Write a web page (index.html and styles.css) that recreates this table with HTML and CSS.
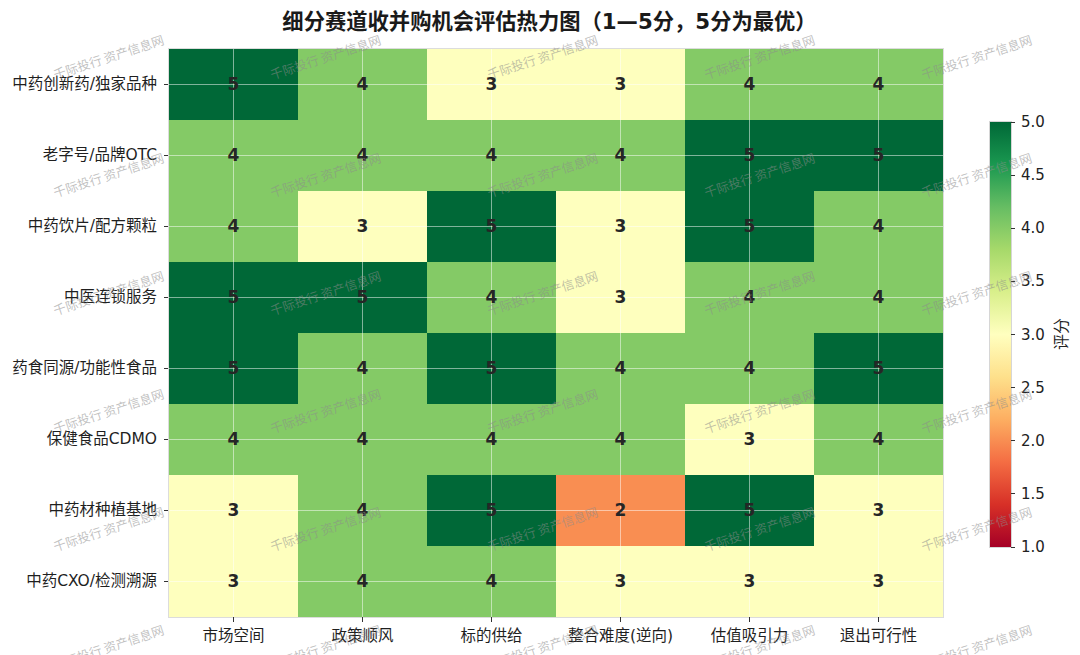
FILE: index.html
```html
<!DOCTYPE html>
<html lang="zh-CN">
<head>
<meta charset="utf-8">
<title>细分赛道收并购机会评估热力图</title>
<link rel="stylesheet" href="styles.css">
</head>
<body>
<div class="page">
  <h1 class="title">细分赛道收并购机会评估热力图（1—5分，5分为最优）</h1>
  <div class="chart">
    <div class="ylabels">
      <div class="ylabel"><span>中药创新药/独家品种</span><i class="ytick"></i></div>
      <div class="ylabel"><span>老字号/品牌OTC</span><i class="ytick"></i></div>
      <div class="ylabel"><span>中药饮片/配方颗粒</span><i class="ytick"></i></div>
      <div class="ylabel"><span>中医连锁服务</span><i class="ytick"></i></div>
      <div class="ylabel"><span>药食同源/功能性食品</span><i class="ytick"></i></div>
      <div class="ylabel"><span>保健食品CDMO</span><i class="ytick"></i></div>
      <div class="ylabel"><span>中药材种植基地</span><i class="ytick"></i></div>
      <div class="ylabel"><span>中药CXO/检测溯源</span><i class="ytick"></i></div>
    </div>
    <div class="plot-col">
      <div class="heatmap">
        <div class="cell v5">5</div><div class="cell v4">4</div><div class="cell v3">3</div><div class="cell v3">3</div><div class="cell v4">4</div><div class="cell v4">4</div>
        <div class="cell v4">4</div><div class="cell v4">4</div><div class="cell v4">4</div><div class="cell v4">4</div><div class="cell v5">5</div><div class="cell v5">5</div>
        <div class="cell v4">4</div><div class="cell v3">3</div><div class="cell v5">5</div><div class="cell v3">3</div><div class="cell v5">5</div><div class="cell v4">4</div>
        <div class="cell v5">5</div><div class="cell v5">5</div><div class="cell v4">4</div><div class="cell v3">3</div><div class="cell v4">4</div><div class="cell v4">4</div>
        <div class="cell v5">5</div><div class="cell v4">4</div><div class="cell v5">5</div><div class="cell v4">4</div><div class="cell v4">4</div><div class="cell v5">5</div>
        <div class="cell v4">4</div><div class="cell v4">4</div><div class="cell v4">4</div><div class="cell v4">4</div><div class="cell v3">3</div><div class="cell v4">4</div>
        <div class="cell v3">3</div><div class="cell v4">4</div><div class="cell v5">5</div><div class="cell v2">2</div><div class="cell v5">5</div><div class="cell v3">3</div>
        <div class="cell v3">3</div><div class="cell v4">4</div><div class="cell v4">4</div><div class="cell v3">3</div><div class="cell v3">3</div><div class="cell v3">3</div>
      </div>
      <div class="xlabels">
        <div class="xlabel"><i class="xtick"></i><span>市场空间</span></div>
        <div class="xlabel"><i class="xtick"></i><span>政策顺风</span></div>
        <div class="xlabel"><i class="xtick"></i><span>标的供给</span></div>
        <div class="xlabel"><i class="xtick"></i><span>整合难度(逆向)</span></div>
        <div class="xlabel"><i class="xtick"></i><span>估值吸引力</span></div>
        <div class="xlabel"><i class="xtick"></i><span>退出可行性</span></div>
      </div>
    </div>
    <div class="cbar-wrap">
      <div class="cbar"></div>
      <div class="cbar-ticks">
        <div class="ctick">5.0</div>
        <div class="ctick">4.5</div>
        <div class="ctick">4.0</div>
        <div class="ctick">3.5</div>
        <div class="ctick">3.0</div>
        <div class="ctick">2.5</div>
        <div class="ctick">2.0</div>
        <div class="ctick">1.5</div>
        <div class="ctick">1.0</div>
      </div>
      <div class="cbar-label-box"><span class="cbar-label">评分</span></div>
    </div>
  </div>
  <div class="watermarks">
    <span>千际投行 资产信息网</span><span>千际投行 资产信息网</span><span>千际投行 资产信息网</span><span>千际投行 资产信息网</span><span>千际投行 资产信息网</span>
    <span>千际投行 资产信息网</span><span>千际投行 资产信息网</span><span>千际投行 资产信息网</span><span>千际投行 资产信息网</span><span>千际投行 资产信息网</span>
    <span>千际投行 资产信息网</span><span>千际投行 资产信息网</span><span>千际投行 资产信息网</span><span>千际投行 资产信息网</span><span>千际投行 资产信息网</span>
    <span>千际投行 资产信息网</span><span>千际投行 资产信息网</span><span>千际投行 资产信息网</span><span>千际投行 资产信息网</span><span>千际投行 资产信息网</span>
    <span>千际投行 资产信息网</span><span>千际投行 资产信息网</span><span>千际投行 资产信息网</span><span>千际投行 资产信息网</span><span>千际投行 资产信息网</span>
    <span>千际投行 资产信息网</span><span>千际投行 资产信息网</span><span>千际投行 资产信息网</span><span>千际投行 资产信息网</span><span>千际投行 资产信息网</span>
  </div>
</div>
</body>
</html>
```

FILE: styles.css
```css
* { box-sizing: border-box; }
html, body { margin: 0; padding: 0; background: #fff; }
.page {
  position: relative;
  width: 1080px;
  height: 655px;
  overflow: hidden;
  background: #fff;
  color: #222;
  font-family: "DejaVu Sans", "Noto Sans CJK SC", sans-serif;
}
.title {
  margin: 8px 0 0;
  padding-left: 19px;
  height: 28px;
  line-height: 28px;
  font-size: 21.3px;
  font-weight: bold;
  text-align: center;
  color: #1a1a1a;
  white-space: nowrap;
}
.chart {
  display: flex;
  align-items: flex-start;
  margin-top: 13px;
}
.ylabels {
  width: 169px;
  display: grid;
  grid-template-rows: repeat(8, 71px);
}
.ylabel {
  display: flex;
  align-items: center;
  justify-content: flex-end;
  font-size: 15.5px;
  line-height: 1.2;
  white-space: nowrap;
  color: #1f1f1f;
}
.ytick {
  display: block;
  width: 5px;
  height: 1px;
  margin-left: 7px;
  background: #333;
}
.heatmap {
  display: grid;
  grid-template-columns: repeat(6, 129px);
  grid-template-rows: repeat(8, 71px);
  box-shadow: 0 0 0 1px #dcdcdc;
}
.cell {
  display: flex;
  align-items: center;
  justify-content: center;
  font-family: "DejaVu Sans", sans-serif;
  font-weight: bold;
  font-size: 17px;
  line-height: 1;
  color: #262626;
  background-image:
    linear-gradient(rgba(255,255,255,0.5), rgba(255,255,255,0.5)),
    linear-gradient(rgba(255,255,255,0.5), rgba(255,255,255,0.5));
  background-size: 1px 100%, 100% 1px;
  background-position: 64px 0, 0 35px;
  background-repeat: no-repeat;
}
.v5 { background-color: #006837; }
.v4 { background-color: #84ca66; }
.v3 { background-color: #feffbe; }
.v2 { background-color: #f98e52; }
.xlabels {
  display: grid;
  grid-template-columns: repeat(6, 129px);
}
.xlabel {
  display: flex;
  flex-direction: column;
  align-items: center;
  font-size: 15.5px;
  line-height: 18px;
  white-space: nowrap;
  color: #1f1f1f;
}
.xtick {
  display: block;
  width: 1px;
  height: 5px;
  background: #333;
  margin-bottom: 5px;
}
.cbar-wrap {
  display: flex;
  align-items: flex-start;
  margin-left: 47px;
  margin-top: 73px;
}
.cbar {
  width: 21px;
  height: 425px;
  box-shadow: 0 0 0 1px #d6d6d6;
  background: linear-gradient(to top,
    #a50026 0%, #d73027 10%, #f46d43 20%, #fdae61 30%, #fee08b 40%,
    #ffffbf 50%, #d9ef8b 60%, #a6d96a 70%, #66bd63 80%, #1a9850 90%, #006837 100%);
}
.cbar-ticks {
  height: 443px;
  margin-top: -9px;
  display: flex;
  flex-direction: column;
  justify-content: space-between;
}
.ctick {
  display: flex;
  align-items: center;
  height: 18px;
  line-height: 18px;
  font-size: 15px;
  color: #222;
}
.ctick::before {
  content: "";
  display: block;
  width: 4px;
  height: 1px;
  background: #333;
  margin-right: 6px;
}
.cbar-label-box {
  height: 425px;
  display: flex;
  align-items: center;
  margin-left: 7px;
}
.cbar-label {
  writing-mode: vertical-rl;
  text-orientation: sideways;
  transform: rotate(180deg);
  font-family: "Noto Sans CJK SC", sans-serif;
  font-size: 16px;
  line-height: 1;
  color: #222;
}
.watermarks {
  position: absolute;
  left: 0;
  top: -2px;
  display: grid;
  grid-template-columns: repeat(5, 217px);
  grid-template-rows: repeat(6, 118px);
  pointer-events: none;
}
.watermarks span {
  justify-self: center;
  align-self: center;
  transform: rotate(-18deg);
  font-family: "Noto Sans CJK SC", sans-serif;
  font-size: 12.5px;
  line-height: 1;
  white-space: nowrap;
  color: rgba(140, 140, 140, 0.55);
}
```
